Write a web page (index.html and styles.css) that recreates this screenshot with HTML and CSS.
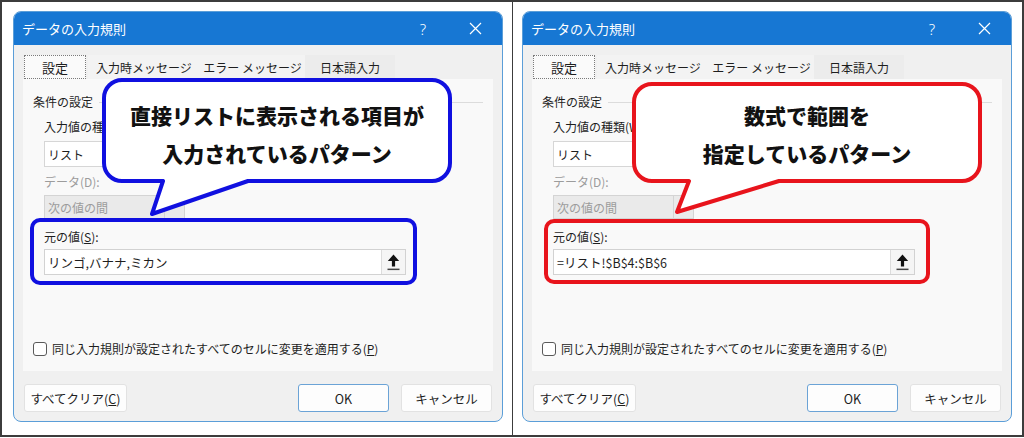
FILE: index.html
```html
<!DOCTYPE html>
<html lang="ja">
<head>
<meta charset="utf-8">
<title>データの入力規則</title>
<link rel="stylesheet" href="styles.css">
</head>
<body>
<div class="frame">
  <section class="pane pane-left">
    <div class="dialog">
      <div class="titlebar">
        <span class="title">データの入力規則</span>
        <span class="help">?</span>
        <span class="close"><svg width="13" height="13" viewBox="0 0 13 13"><path d="M1 1 L12 12 M12 1 L1 12" stroke="#fff" stroke-width="1.2" fill="none"/></svg></span>
      </div>
      <div class="dlg-body">
        <div class="tabs">
          <div class="tab tab-active">設定</div>
          <div class="tab tab-w2">入力時メッセージ</div>
          <div class="tab tab-w3">エラー メッセージ</div>
          <div class="tab tab-w4">日本語入力</div>
        </div>
        <div class="tabpanel">
          <div class="group-head"><span>条件の設定</span><span class="rule"></span></div>
          <div class="fields">
            <div class="label lbl-type">入力値の種類(W):</div>
            <div class="combo"><span>リスト</span></div>
            <div class="label lbl-data disabled">データ(D):</div>
            <div class="combo combo-disabled"><span class="combo-text">次の値の間</span><span class="drop"></span></div>
            <div class="label lbl-src">元の値(<u>S</u>):</div>
            <div class="source">
              <span class="source-text">リンゴ,バナナ,ミカン</span>
              <span class="ref-btn"><svg width="13" height="17" viewBox="0 0 13 17"><path d="M6.5 0.5 L12.2 7 L8.1 7 L8.1 12.6 L4.9 12.6 L4.9 7 L0.8 7 Z" fill="#111"/><rect x="0.5" y="14.6" width="12" height="1.5" fill="#444"/></svg></span>
            </div>
          </div>
          <div class="apply"><span class="check"></span><span>同じ入力規則が設定されたすべてのセルに変更を適用する(<u>P</u>)</span></div>
        </div>
        <div class="buttons">
          <button class="btn btn-clear">すべてクリア(<u>C</u>)</button>
          <span class="spacer"></span>
          <button class="btn btn-ok">OK</button>
          <button class="btn btn-cancel">キャンセル</button>
        </div>
      </div>
    </div>
    <div class="highlight hl-left"></div>
    <div class="callout callout-left">
      <svg class="callout-shape" width="350" height="142" viewBox="0 0 350 142"><path d="M20 2 H330 A18 18 0 0 1 348 20 V85 A18 18 0 0 1 330 103 H146 L50 136 L61 103 H20 A18 18 0 0 1 2 85 V20 A18 18 0 0 1 20 2 Z" fill="#fff" stroke="#1010e0" stroke-width="4" stroke-linejoin="round"/></svg>
      <div class="callout-text">直接リストに表示される項目が<br>入力されているパターン</div>
    </div>
  </section>
  <section class="pane pane-right">
    <div class="dialog">
      <div class="titlebar">
        <span class="title">データの入力規則</span>
        <span class="help">?</span>
        <span class="close"><svg width="13" height="13" viewBox="0 0 13 13"><path d="M1 1 L12 12 M12 1 L1 12" stroke="#fff" stroke-width="1.2" fill="none"/></svg></span>
      </div>
      <div class="dlg-body">
        <div class="tabs">
          <div class="tab tab-active">設定</div>
          <div class="tab tab-w2">入力時メッセージ</div>
          <div class="tab tab-w3">エラー メッセージ</div>
          <div class="tab tab-w4">日本語入力</div>
        </div>
        <div class="tabpanel">
          <div class="group-head"><span>条件の設定</span><span class="rule"></span></div>
          <div class="fields">
            <div class="label lbl-type">入力値の種類(W):</div>
            <div class="combo"><span>リスト</span></div>
            <div class="label lbl-data disabled">データ(D):</div>
            <div class="combo combo-disabled"><span class="combo-text">次の値の間</span><span class="drop"></span></div>
            <div class="label lbl-src">元の値(<u>S</u>):</div>
            <div class="source">
              <span class="source-text">=リスト!$B$4:$B$6</span>
              <span class="ref-btn"><svg width="13" height="17" viewBox="0 0 13 17"><path d="M6.5 0.5 L12.2 7 L8.1 7 L8.1 12.6 L4.9 12.6 L4.9 7 L0.8 7 Z" fill="#111"/><rect x="0.5" y="14.6" width="12" height="1.5" fill="#444"/></svg></span>
            </div>
          </div>
          <div class="apply"><span class="check"></span><span>同じ入力規則が設定されたすべてのセルに変更を適用する(<u>P</u>)</span></div>
        </div>
        <div class="buttons">
          <button class="btn btn-clear">すべてクリア(<u>C</u>)</button>
          <span class="spacer"></span>
          <button class="btn btn-ok">OK</button>
          <button class="btn btn-cancel">キャンセル</button>
        </div>
      </div>
    </div>
    <div class="highlight hl-right"></div>
    <div class="callout callout-right">
      <svg class="callout-shape" width="350" height="136" viewBox="0 0 350 136"><path d="M20 2 H330 A18 18 0 0 1 348 20 V81 A18 18 0 0 1 330 99 H147 L45 130 L57 99 H20 A18 18 0 0 1 2 81 V20 A18 18 0 0 1 20 2 Z" fill="#fff" stroke="#e8141c" stroke-width="4" stroke-linejoin="round"/></svg>
      <div class="callout-text">数式で範囲を<br>指定しているパターン</div>
    </div>
  </section>
</div>
</body>
</html>
```

FILE: styles.css
```css
* { box-sizing: border-box; }

body {
  margin: 0;
  background: #ffffff;
  font-family: "Noto Sans CJK JP", "Noto Sans", sans-serif;
  color: #1e1e1e;
}

.frame {
  width: 1024px;
  height: 437px;
  border: 2px solid #3c3c3c;
  display: flex;
}

.pane {
  position: relative;
  padding-top: 9px;
}

.pane-left {
  width: 511px;
  padding-left: 11px;
  border-right: 1px solid #3c3c3c;
}

.pane-right {
  flex: 1;
  padding-left: 9px;
}

.dialog {
  width: 490px;
  height: 411px;
  border: 1px solid #5b9ed8;
  border-radius: 8px;
  overflow: hidden;
  background: #f0f0f0;
  display: flex;
  flex-direction: column;
}

.titlebar {
  height: 33px;
  background: #1777d3;
  color: #ffffff;
  display: flex;
  align-items: center;
  padding: 0 15px 0 8px;
  font-size: 13px;
  flex: none;
}

.title { flex: 1; }

.help {
  width: 20px;
  margin-right: 30px;
  text-align: center;
  font-size: 15px;
  font-family: "Noto Sans", sans-serif;
  font-weight: 300;
}

.close {
  width: 24px;
  display: flex;
  justify-content: center;
  align-items: center;
}

.dlg-body {
  padding: 10px 9px 0 9px;
  display: flex;
  flex-direction: column;
}

.tabs {
  display: flex;
  height: 24px;
  margin-left: 1px;
}

.tab {
  height: 24px;
  display: flex;
  align-items: center;
  justify-content: center;
  font-size: 12px;
  background: #f3f3f3;
  color: #1e1e1e;
}

.tab-active {
  width: 62px;
  margin-right: 2px;
  font-size: 13px;
  background: #fafafa;
  border: 1px dotted #7a7a7a;
}

.tab-w2 { width: 112px; }
.tab-w3 { width: 105px; }
.tab-w4 { width: 90px; background: #ececec; }

.tabpanel {
  height: 292px;
  background: #f9f9f9;
  padding: 14px 10px 0 10px;
  font-size: 12px;
}

.group-head {
  display: flex;
  align-items: center;
  height: 18px;
  line-height: 18px;
}

.rule {
  flex: 1;
  height: 1px;
  background: #dcdcdc;
  margin-left: 6px;
}

.fields {
  margin-left: 11px;
}

.label {
  height: 18px;
  line-height: 18px;
}

.lbl-type { margin-top: 7px; }
.lbl-data { margin-top: 6px; }
.lbl-src { margin-top: 9px; }

.disabled { color: #9c9c9c; }

.combo {
  width: 170px;
  height: 26px;
  margin-top: 5px;
  border: 1px solid #d6d6d6;
  background: #ffffff;
  display: flex;
  align-items: center;
  padding-left: 3px;
}

.combo-disabled {
  width: 141px;
  height: 24px;
  margin-top: 4px;
  background: #eaeaea;
  border-color: #d4d4d4;
  color: #9c9c9c;
  padding-left: 0;
}

.combo-text {
  flex: 1;
  padding-left: 3px;
}

.drop {
  width: 20px;
  height: 100%;
  border-left: 1px solid #d4d4d4;
}

.source {
  width: 362px;
  height: 26px;
  margin-top: 3px;
  border: 1px solid #d2d2d2;
  background: #ffffff;
  display: flex;
  align-items: center;
}

.source-text {
  flex: 1;
  padding-left: 3px;
  font-size: 12.5px;
}

.ref-btn {
  width: 24px;
  height: 24px;
  background: #f5f5f5;
  border-left: 1px solid #dcdcdc;
  display: flex;
  align-items: center;
  justify-content: center;
}

.apply {
  margin-top: 65px;
  height: 18px;
  display: flex;
  align-items: center;
  line-height: 18px;
}

.check {
  width: 14px;
  height: 14px;
  border: 1px solid #5a5a5a;
  border-radius: 3px;
  background: #ffffff;
  margin-right: 5px;
}

.buttons {
  display: flex;
  margin-top: 13px;
  padding: 0 1px;
}

.spacer { flex: 1; }

.btn {
  height: 28px;
  font-family: "Noto Sans CJK JP", "Noto Sans", sans-serif;
  font-size: 12.5px;
  color: #1e1e1e;
  background: #fdfdfd;
  border: 1px solid #e2e2e2;
  border-radius: 3px;
  padding: 0;
}

.btn-clear { width: 103px; }
.btn-ok { width: 91px; margin-right: 12px; border-color: #6ba3d6; }
.btn-cancel { width: 91px; }

.highlight {
  position: absolute;
  border-radius: 10px;
  border: 4px solid #1010e0;
}

.hl-left {
  left: 28px;
  top: 216px;
  width: 387px;
  height: 67px;
}

.hl-right {
  left: 31px;
  top: 217px;
  width: 386px;
  height: 65px;
  border-color: #e8141c;
}

.callout {
  position: absolute;
  width: 350px;
}

.callout-left { left: 100px; top: 76px; height: 142px; }
.callout-right { left: 119px; top: 80px; height: 136px; }

.callout-shape {
  position: absolute;
  left: 0;
  top: 0;
}

.callout-text {
  position: relative;
  text-align: center;
  font-size: 21px;
  font-weight: 900;
  line-height: 38px;
  color: #111111;
}

.callout-left .callout-text { padding-top: 18px; }
.callout-right .callout-text { padding-top: 14px; }
```
